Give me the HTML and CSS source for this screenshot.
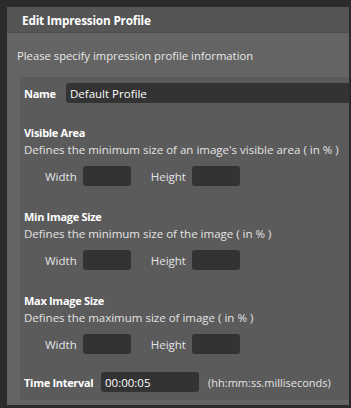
FILE: index.html
```html
<!DOCTYPE html>
<html lang="en">
<head>
    <meta charset="UTF-8">
    <title>Edit Impression Profile</title>
    <link rel="stylesheet" href="styles.css">
</head>
<body>
    <div class="dialog">
        <div class="dialog-title">Edit Impression Profile</div>
        <div class="dialog-body">
            <p class="intro">Please specify impression profile information</p>
            <div class="panel">
                <div class="name-row">
                    <label class="label">Name</label>
                    <input type="text" class="name-input" value="Default Profile">
                </div>

                <div class="group">
                    <div class="group-title">Visible Area</div>
                    <div class="group-desc">Defines the minimum size of an image's visible area ( in % )</div>
                    <div class="size-row">
                        <span class="size-label">Width</span>
                        <input type="text" class="size-input">
                        <span class="size-label">Height</span>
                        <input type="text" class="size-input">
                    </div>
                </div>

                <div class="group">
                    <div class="group-title">Min Image Size</div>
                    <div class="group-desc">Defines the minimum size of the image ( in % )</div>
                    <div class="size-row">
                        <span class="size-label">Width</span>
                        <input type="text" class="size-input">
                        <span class="size-label">Height</span>
                        <input type="text" class="size-input">
                    </div>
                </div>

                <div class="group">
                    <div class="group-title">Max Image Size</div>
                    <div class="group-desc">Defines the maximum size of image ( in % )</div>
                    <div class="size-row">
                        <span class="size-label">Width</span>
                        <input type="text" class="size-input">
                        <span class="size-label">Height</span>
                        <input type="text" class="size-input">
                    </div>
                </div>

                <div class="time-row">
                    <label class="label">Time Interval</label>
                    <input type="text" class="time-input" value="00:00:05">
                    <span class="hint">(hh:mm:ss.milliseconds)</span>
                </div>
            </div>
        </div>
    </div>
</body>
</html>
```

FILE: styles.css
```css
body {
    margin: 0;
    height: 408px;
    background: #2b2b2b;
    font-family: "Open Sans", "Noto Sans", sans-serif;
    font-size: 11px;
    overflow: hidden;
}
.dialog {
    margin: 7px 2px 0 7px;
    height: 398px;
    background: #646464;
    overflow: hidden;
    display: flex;
    flex-direction: column;
}
.dialog-title {
    height: 25px;
    line-height: 26px;
    padding-left: 15px;
    background: #555555;
    border-bottom: 1px solid #4d4d4d;
    color: #ffffff;
    font-weight: bold;
    font-size: 11.8px;
    letter-spacing: -0.2px;
}
.dialog-body {
    padding: 0 0 0 13px;
}
.intro {
    margin: 15px 0 13px -3px;
    line-height: 16px;
    color: #e8e8e8;
    font-size: 11.25px;
}
.panel {
    margin-right: -30px;
    background: #5b5b5b;
    border-radius: 4px;
    padding: 6px 0 8px 4px;
}
.label {
    color: #ffffff;
    font-weight: bold;
    letter-spacing: -0.3px;
}
input {
    border: none;
    border-radius: 3px;
    background: #333333;
    color: #ffffff;
    font-family: inherit;
    font-size: 11.5px;
    height: 20px;
    padding: 0 4px;
    box-sizing: border-box;
    outline: none;
}
.name-row {
    display: flex;
    align-items: center;
}
.name-row .label {
    width: 42px;
}
.name-input {
    flex: 1;
}
.group {
    margin-top: 22px;
}
.group + .group {
    margin-top: 23px;
}
.group-title {
    color: #ffffff;
    font-weight: bold;
    line-height: 16px;
    letter-spacing: -0.3px;
}
.group-desc {
    color: #e4e4e4;
    font-size: 11.5px;
    line-height: 18px;
}
.size-row {
    display: flex;
    align-items: center;
    padding-left: 21px;
    margin-top: 7px;
    font-size: 11.5px;
}
.size-label {
    color: #e4e4e4;
    margin-right: 6px;
}
.size-input {
    width: 48px;
    margin-right: 20px;
}
.time-row {
    display: flex;
    align-items: center;
    margin-top: 18px;
}
.time-row .label {
    width: 77px;
}
.time-input {
    width: 98px;
}
.hint {
    color: #e4e4e4;
    margin-left: 9px;
}
```
